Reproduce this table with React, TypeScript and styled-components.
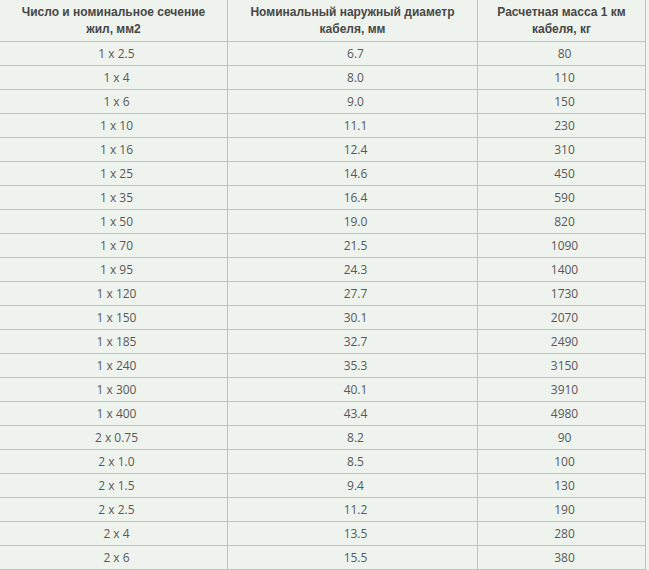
import React from 'react';
import styled, { createGlobalStyle } from 'styled-components';

const GlobalStyle = createGlobalStyle`
  html, body {
    margin: 0;
    padding: 0;
    background: #eff3ee;
  }
`;

const Page = styled.div`
  width: 649px;
  height: 570px;
  overflow: hidden;
  background: #eff3ee;
`;

const Table = styled.table`
  width: 646px;
  table-layout: fixed;
  border-collapse: separate;
  border-spacing: 0;
`;

const Head = styled.th<{ $w: number; $pad: number }>`
  width: ${p => p.$w}px;
  box-sizing: border-box;
  height: 42px;
  padding: 4px ${p => p.$pad}px 0;
  vertical-align: top;
  font-family: "Liberation Sans", Arial, sans-serif;
  font-size: 12px;
  font-weight: 700;
  line-height: 17px;
  color: #474747;
  text-align: center;
  border-bottom: 1px solid #bfc3be;
  border-right: 1px solid #bfc3be;
`;

const Cell = styled.td`
  box-sizing: border-box;
  height: 24px;
  padding: 0 0 0 6px;
  font-family: "Open Sans", "Liberation Sans", sans-serif;
  font-size: 12px;
  color: #585858;
  text-align: center;
  vertical-align: middle;
  border-bottom: 1px solid #bfc3be;
  border-right: 1px solid #bfc3be;
`;

const rows: [string, string, string][] = [
  ['1 x 2.5', '6.7', '80'],
  ['1 x 4', '8.0', '110'],
  ['1 x 6', '9.0', '150'],
  ['1 x 10', '11.1', '230'],
  ['1 x 16', '12.4', '310'],
  ['1 x 25', '14.6', '450'],
  ['1 x 35', '16.4', '590'],
  ['1 x 50', '19.0', '820'],
  ['1 x 70', '21.5', '1090'],
  ['1 x 95', '24.3', '1400'],
  ['1 x 120', '27.7', '1730'],
  ['1 x 150', '30.1', '2070'],
  ['1 x 185', '32.7', '2490'],
  ['1 x 240', '35.3', '3150'],
  ['1 x 300', '40.1', '3910'],
  ['1 x 400', '43.4', '4980'],
  ['2 x 0.75', '8.2', '90'],
  ['2 x 1.0', '8.5', '100'],
  ['2 x 1.5', '9.4', '130'],
  ['2 x 2.5', '11.2', '190'],
  ['2 x 4', '13.5', '280'],
  ['2 x 6', '15.5', '380'],
];

export default function App() {
  return (
    <Page>
      <GlobalStyle />
      <Table>
        <thead>
          <tr>
            <Head $w={228} $pad={16}>Число и номинальное сечение жил, мм2</Head>
            <Head $w={250} $pad={6}>Номинальный наружный диаметр кабеля, мм</Head>
            <Head $w={168} $pad={6}>Расчетная масса 1 км кабеля, кг</Head>
          </tr>
        </thead>
        <tbody>
          {rows.map(r => (
            <tr key={r[0]}>
              <Cell>{r[0]}</Cell>
              <Cell>{r[1]}</Cell>
              <Cell>{r[2]}</Cell>
            </tr>
          ))}
        </tbody>
      </Table>
    </Page>
  );
}
